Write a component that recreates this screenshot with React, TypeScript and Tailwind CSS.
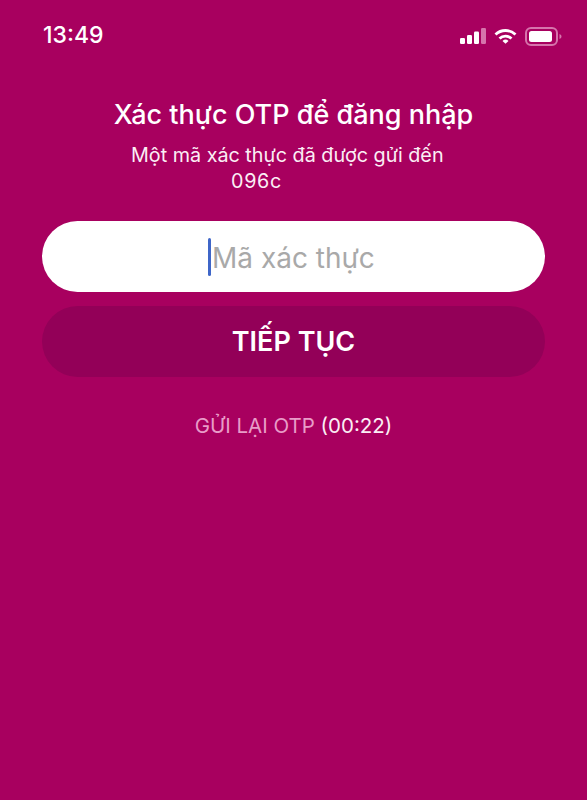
export default function App() {
  return (
    <div className="w-[587px] h-[800px] bg-[#a8005f] text-white flex flex-col overflow-hidden" style={{ fontFamily: 'Inter, "Noto Sans", sans-serif' }}>
      <div className="h-[70px] pl-[43px] pr-[25px] pt-[22px] flex justify-between items-start">
        <span className="text-[23px] leading-[26px] font-medium">13:49</span>
        <div className="flex items-center gap-[8px] mt-[5px]">
          <svg width="26" height="17" viewBox="0 0 26 17"><rect x="0" y="10" width="5" height="6" rx="1.2" fill="#fff"/><rect x="7" y="7" width="5" height="9" rx="1.2" fill="#fff"/><rect x="14" y="3.500" width="5" height="12.500" rx="1.2" fill="#fff"/><rect x="21" y="0" width="5" height="16" rx="1.2" fill="#d674ac"/></svg>
          <svg width="23" height="17" viewBox="0 0 23 17" fill="none" stroke="#fff" strokeWidth="2.8"><path d="M1.500 6.500a14.500 14.500 0 0 1 20 0"/><path d="M5.500 10.500a8.800 8.800 0 0 1 12 0"/><path d="M11.500 15.800l-3-2.800a4.300 4.300 0 0 1 6 0z" fill="#fff" stroke="none"/></svg>
          <svg width="37" height="19" viewBox="0 0 37 19" fill="none"><rect x="1" y="1" width="31" height="17" rx="5" stroke="#d674ac" strokeWidth="2"/><rect x="4" y="4" width="23" height="11" rx="2.500" fill="#fff"/><path d="M34.500 7v5c1.200-.4 2-1.400 2-2.500s-.8-2.100-2-2.500z" fill="#d674ac"/></svg>
        </div>
      </div>
      <h1 className="text-[27px] leading-[32px] font-medium text-center mt-[29px]">Xác thực OTP để đăng nhập</h1>
      <div className="text-[19.750px] leading-[26px] mt-[11px] pl-[131px] text-[#fbeef5]">
        <div>Một mã xác thực đã được gửi đến</div>
        <div className="pl-[100px] tracking-[0.7px]">096c</div>
      </div>
      <div className="mx-[42px] mt-[27px] h-[71px] rounded-full bg-white flex items-center pl-[166px]">
        <span className="w-[3px] h-[38px] rounded-full bg-[#3f66c8]"></span>
        <span className="text-[28px] text-[#a9a9a9] ml-[1px] pt-[2px]">Mã xác thực</span>
      </div>
      <div className="mx-[42px] mt-[14px] h-[71px] rounded-full bg-[#930058] flex items-center justify-center text-[27px] font-semibold pt-[1px]">TIẾP TỤC</div>
      <div className="mt-[36px] text-center text-[20.500px] leading-[26px]">
        <span className="text-[#e89cc8]">GỬI LẠI OTP</span> <span className="text-[#fbeef5]">(00:22)</span>
      </div>
    </div>
  );
}
